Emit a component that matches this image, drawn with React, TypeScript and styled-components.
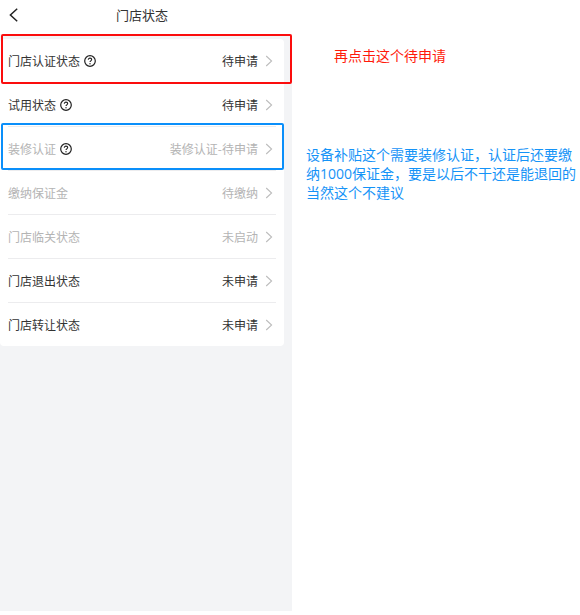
import React from "react";
import styled, { createGlobalStyle } from "styled-components";

const GlobalStyle = createGlobalStyle`
  * { box-sizing: border-box; }
  body {
    margin: 0;
    background: #fff;
    font-family: "Noto Sans CJK SC", sans-serif;
  }
`;

const Page = styled.div`
  display: grid;
  grid-template-columns: 292fr 288fr;
  min-height: 100vh;
  padding-bottom: 4px;
`;

const Panel = styled.main`
  background: #f3f4f6;
`;

const Header = styled.header`
  display: grid;
  grid-template-columns: 28px 1fr 28px;
  align-items: center;
  height: 34px;
  padding: 0 8px 4px 0;
  background: #fff;
`;

const BackButton = styled.button`
  display: flex;
  padding: 0 0 0 8px;
  border: 0;
  background: none;
  color: #222;
  cursor: pointer;
`;

const Title = styled.h1`
  margin: 0;
  font-size: 13px;
  line-height: 20px;
  font-weight: 400;
  text-align: center;
  color: #333;
`;

const Card = styled.ul`
  list-style: none;
  margin: 5px 8px 0 0;
  padding: 0 8px;
  border-radius: 4px;
  background: #fff;
`;

const Item = styled.li`
  position: relative;
  &:not(:last-child) {
    border-bottom: 1px solid #ececee;
  }
`;

const RowButton = styled.button<{ $muted?: boolean }>`
  display: flex;
  align-items: center;
  gap: 4px;
  width: 100%;
  height: 43px;
  padding: 0 3px 0 0;
  border: 0;
  background: none;
  font-family: inherit;
  font-size: 12px;
  line-height: 19px;
  text-align: left;
  color: ${(p) => (p.$muted ? "#b4b4b4" : "#333")};
  cursor: pointer;
`;

const Value = styled.span`
  margin-left: auto;
  margin-right: 3px;
`;

const Highlight = styled.span<{ $tone: "red" | "blue" }>`
  position: absolute;
  z-index: 1;
  top: ${(p) => (p.$tone === "red" ? "-5px" : "-4px")};
  bottom: ${(p) => (p.$tone === "red" ? "-2px" : "0")};
  left: -7px;
  right: ${(p) => (p.$tone === "red" ? "-16px" : "-8px")};
  border: 2px solid ${(p) => (p.$tone === "red" ? "#fb0d0d" : "#0a8ffa")};
  border-radius: 2px;
  pointer-events: none;
`;

const Notes = styled.aside`
  display: flex;
  flex-direction: column;
  padding: 46px 0 0 14px;
  font-family: "Open Sans", "Noto Sans CJK SC", sans-serif;
  font-size: 14px;
  line-height: 19px;
`;

const Note = styled.p<{ $tone: "red" | "blue" }>`
  margin: 0;
  padding-left: ${(p) => (p.$tone === "red" ? "28px" : "0")};
  color: ${(p) => (p.$tone === "red" ? "#ff1a0a" : "#1593f7")};
  & + & {
    margin-top: 80px;
  }
`;

const Line = styled.span`
  display: block;
  white-space: nowrap;
`;

const BackIcon = () => (
  <svg width="10" height="14" viewBox="0 0 10 14" fill="none" aria-hidden="true">
    <path d="M9.2 0.8 2.4 7l6.8 6.2" stroke="currentColor" strokeWidth="1.5" />
  </svg>
);

const ChevronIcon = () => (
  <svg width="8" height="12" viewBox="0 0 8 12" fill="none" aria-hidden="true">
    <path d="M1.2 1 6.6 6 1.2 11" stroke="#bdbdbd" strokeWidth="1.1" />
  </svg>
);

const HelpIcon = () => (
  <svg width="12" height="12" viewBox="0 0 12 12" fill="none" aria-hidden="true">
    <circle cx="6" cy="6" r="5.3" stroke="#222" strokeWidth="1.2" />
    <path
      d="M4.3 4.8c0-1 .7-1.7 1.7-1.7s1.7.6 1.7 1.5c0 1.2-1.7 1.3-1.7 2.5"
      stroke="#222"
      strokeWidth="1.1"
    />
    <circle cx="6" cy="8.7" r=".7" fill="#222" />
  </svg>
);

type Entry = {
  label: string;
  value: string;
  help?: boolean;
  muted?: boolean;
  mark?: "red" | "blue";
};

const entries: Entry[] = [
  { label: "门店认证状态", value: "待申请", help: true, mark: "red" },
  { label: "试用状态", value: "待申请", help: true },
  { label: "装修认证", value: "装修认证-待申请", help: true, muted: true, mark: "blue" },
  { label: "缴纳保证金", value: "待缴纳", muted: true },
  { label: "门店临关状态", value: "未启动", muted: true },
  { label: "门店退出状态", value: "未申请" },
  { label: "门店转让状态", value: "未申请" },
];

export default function App() {
  return (
    <>
      <GlobalStyle />
      <Page>
        <Panel>
          <Header>
            <BackButton type="button" aria-label="返回">
              <BackIcon />
            </BackButton>
            <Title>门店状态</Title>
          </Header>
          <Card>
            {entries.map((e) => (
              <Item key={e.label}>
                <RowButton type="button" $muted={e.muted}>
                  <span>{e.label}</span>
                  {e.help && <HelpIcon />}
                  <Value>{e.value}</Value>
                  <ChevronIcon />
                </RowButton>
                {e.mark && <Highlight $tone={e.mark} />}
              </Item>
            ))}
          </Card>
        </Panel>
        <Notes>
          <Note $tone="red">再点击这个待申请</Note>
          <Note $tone="blue">
            <Line>设备补贴这个需要装修认证，认证后还要缴</Line>
            <Line>纳1000保证金，要是以后不干还是能退回的</Line>
            <Line>当然这个不建议</Line>
          </Note>
        </Notes>
      </Page>
    </>
  );
}
